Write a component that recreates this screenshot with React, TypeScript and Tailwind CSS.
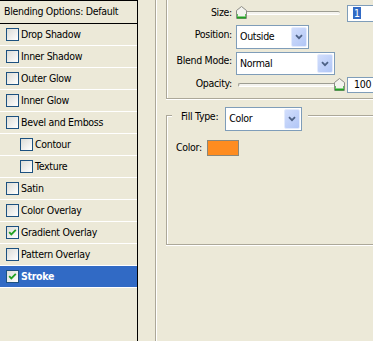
import React from "react";

const FONT = "[font-family:'DejaVu_Sans_Condensed','DejaVu_Sans',sans-serif]";

function Check({ checked }: { checked?: boolean }) {
  return (
    <div className="w-[13px] h-[13px] shrink-0 border border-[#1c5180] bg-[linear-gradient(135deg,#dcdcd7,#ffffff)] flex items-center justify-center">
      {checked && (
        <svg width="9" height="9" viewBox="0 0 9 9">
          <path d="M1.2 4.2 L3.3 6.4 L7.8 1.8" fill="none" stroke="#21a121" strokeWidth="1.8" />
        </svg>
      )}
    </div>
  );
}

function Row({ label, checked, indent, selected }: { label: string; checked?: boolean; indent?: boolean; selected?: boolean }) {
  return (
    <div
      className={
        "h-[22px] border-b border-white flex items-center gap-[2px] " +
        (indent ? "pl-[20px] " : "pl-[6px] ") +
        (selected ? "bg-[#316ac5] text-white font-bold" : "")
      }
    >
      <Check checked={checked} />
      <span className="leading-none">{label}</span>
    </div>
  );
}

function Chevron() {
  return (
    <svg width="8" height="6" viewBox="0 0 8 6">
      <path d="M1 1.2 L4 4.2 L7 1.2" fill="none" stroke="#4d6185" strokeWidth="1.8" />
    </svg>
  );
}

function Select({ value, w, h }: { value: string; w: string; h: string }) {
  return (
    <div className={"border border-[#7f9db9] bg-white flex items-stretch " + w + " " + h}>
      <span className="flex-1 flex items-center pl-[3px]">{value}</span>
      <div className="w-[16px] m-[1px] ml-0 rounded-[2px] border border-[#e3ebfd] bg-[linear-gradient(135deg,#d2defc,#b1c6f6)] flex items-center justify-center">
        <Chevron />
      </div>
    </div>
  );
}

function Thumb() {
  return (
    <svg width="11" height="13" viewBox="0 0 11 13">
      <path d="M0.5 4.5 L5.5 0.5 L10.5 4.5 V12.5 H0.5 Z" fill="#f3f3ee" stroke="#8c8c86" />
      <path d="M1 11.5 H10" stroke="#21a121" strokeWidth="2" />
      <path d="M1.5 8 V11 M9.5 8 V11" stroke="#5cc45c" strokeWidth="1" />
    </svg>
  );
}

function Slider({ pos }: { pos: "start" | "end" }) {
  return (
    <div className="relative w-[108px] h-[14px]">
      <div className="absolute left-[2px] right-[4px] top-[5px] h-[4px] rounded-[2px] border-t border-l border-[#9d9d92] bg-[#f4f3ee] border-b border-b-white" />
      <div className={"absolute top-0 " + (pos === "start" ? "left-0" : "left-[98px]")}>
        <Thumb />
      </div>
    </div>
  );
}

export default function App() {
  const rows = [
    { label: "Drop Shadow" },
    { label: "Inner Shadow" },
    { label: "Outer Glow" },
    { label: "Inner Glow" },
    { label: "Bevel and Emboss" },
    { label: "Contour", indent: true },
    { label: "Texture", indent: true },
    { label: "Satin" },
    { label: "Color Overlay" },
    { label: "Gradient Overlay", checked: true },
    { label: "Pattern Overlay" },
    { label: "Stroke", checked: true, selected: true },
  ];
  return (
    <div className={"w-[373px] h-[341px] overflow-hidden flex bg-[#ece9d8] text-black text-[10.5px] tracking-[-0.3px] " + FONT}>
      {/* left list */}
      <div className="w-[138px] shrink-0 border-r border-black h-full">
        <div className="h-[24px] border-t border-b border-black flex items-center pl-[4px]">
          Blending Options: Default
        </div>
        {rows.map((r) => (
          <Row key={r.label} {...r} />
        ))}
      </div>
      {/* right side */}
      <div className="flex-1 pl-[17px] h-full">
        <div className="h-full w-[260px] border-l border-[#aca899] shadow-[inset_1px_0_0_#fff] pl-[10px]">
          {/* Structure group */}
          <div className="h-[99px] border-l border-b border-[#aca899] shadow-[inset_1px_0_0_#fff,0_1px_0_#fff] pt-[4px]">
            <div className="flex items-center h-[18px]">
              <span className="w-[65px] text-right mb-[1px]">Size:</span>
              <div className="ml-[4px]">
                <Slider pos="start" />
              </div>
              <div className="ml-[3px] w-[40px] h-[17px] border border-[#7f9db9] bg-white flex items-center pl-[5px]">
                <span className="bg-[#316ac5] text-white leading-[12px] px-[1px]">1</span>
              </div>
            </div>
            <div className="flex items-center h-[24px] mt-[3px]">
              <span className="w-[65px] text-right mb-[5px]">Position:</span>
              <div className="ml-[4px]">
                <Select value="Outside" w="w-[73px]" h="h-[24px]" />
              </div>
            </div>
            <div className="flex items-center h-[23px] mt-[3px]">
              <span className="w-[65px] text-right mb-[5px]">Blend Mode:</span>
              <div className="ml-[4px]">
                <Select value="Normal" w="w-[99px]" h="h-[23px]" />
              </div>
            </div>
            <div className="flex items-center h-[16px] mt-[2px]">
              <span className="w-[65px] text-right mb-[3px]">Opacity:</span>
              <div className="ml-[4px]">
                <Slider pos="end" />
              </div>
              <div className="ml-[3px] w-[40px] h-[16px] border border-[#7f9db9] bg-white flex items-center pl-[6px]">
                100
              </div>
            </div>
          </div>
          {/* Fill group */}
          <fieldset className="mt-[8px] h-[138px] border-l border-t border-b border-[#aca899] shadow-[inset_1px_1px_0_#fff,0_1px_0_#fff] pl-[9px]">
            <legend className="-ml-[4px] pl-[9px] pr-[6px] h-[17px] flex items-start bg-[#ece9d8]">
              <span className="h-[17px] pt-[2px] flex items-center">Fill Type:</span>
              <div className="ml-[7px] h-[17px]">
                <Select value="Color" w="w-[77px]" h="h-[24px]" />
              </div>
            </legend>
            <div className="flex items-center mt-[16px]">
              <span>Color:</span>
              <div className="ml-[5px] w-[32px] h-[16px] border border-[#8a877a] bg-[#fe8c20]" />
            </div>
          </fieldset>
        </div>
      </div>
    </div>
  );
}
